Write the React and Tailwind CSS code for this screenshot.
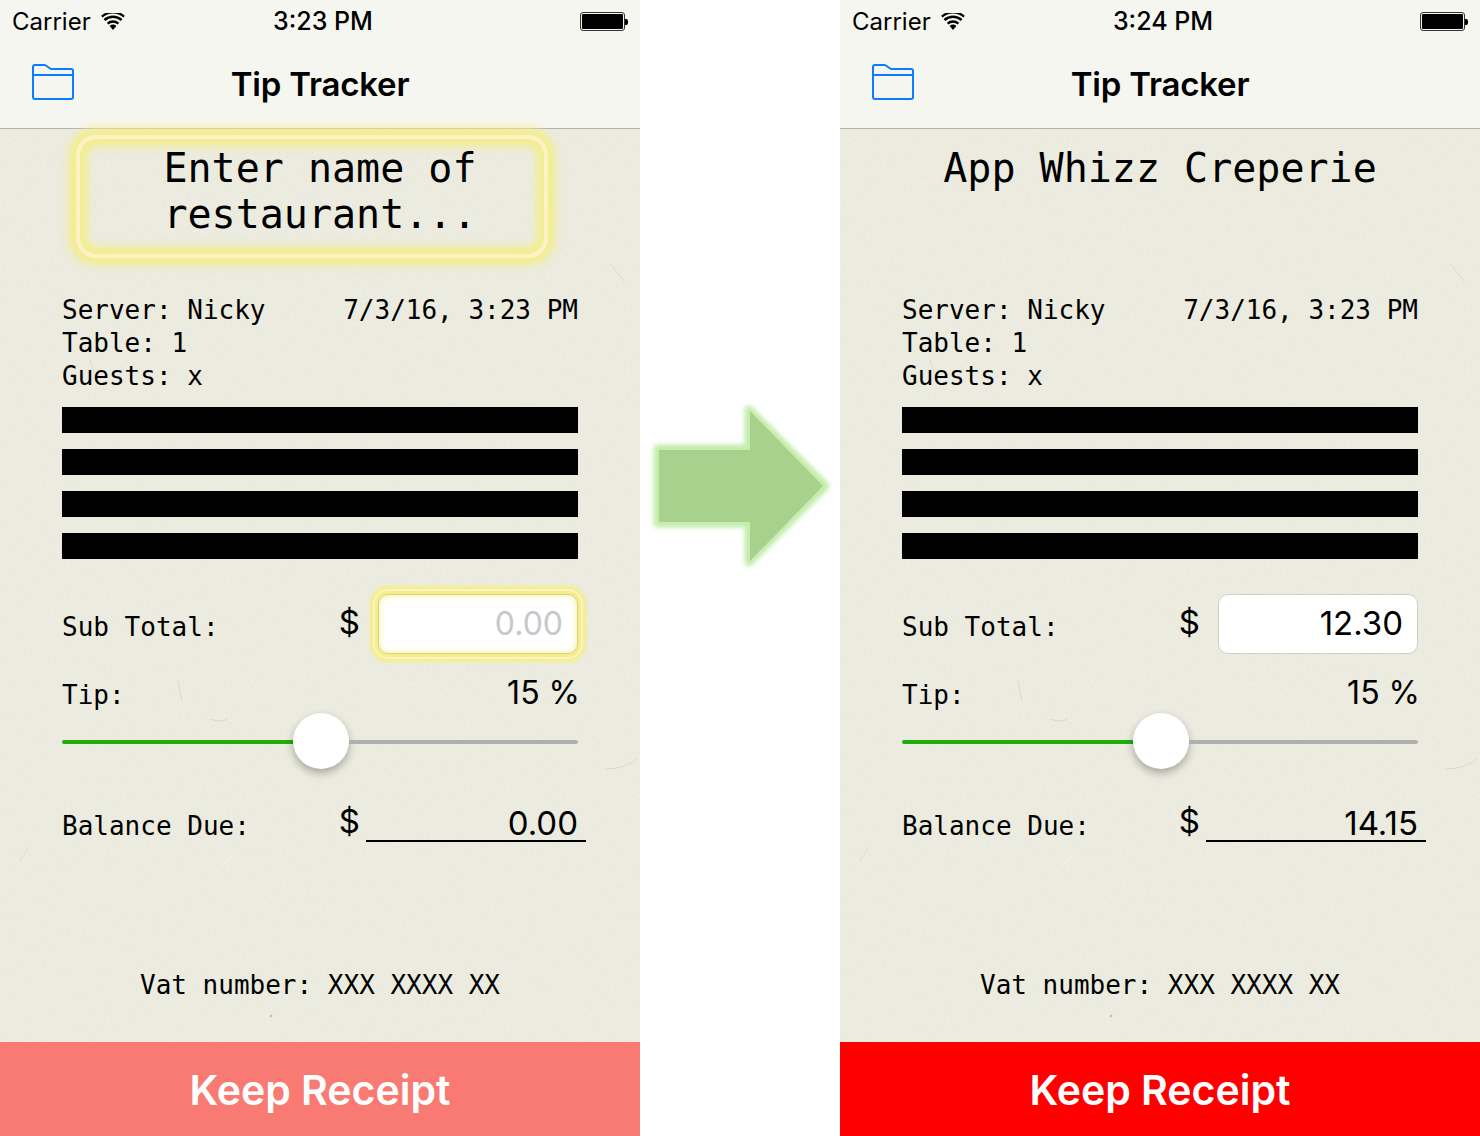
import React from 'react';

const mono = 'font-["DejaVu_Sans_Mono",monospace]';
const sans = 'font-["Inter",sans-serif]';

function Wifi() {
  return (
    <svg width="24" height="18" viewBox="0 0 24 18" className="block">
      <path d="M12 17 L8.6 12.9 A5.2 5.2 0 0 1 15.4 12.9 Z" fill="#000" />
      <path d="M6.6 10.6 A8.2 8.2 0 0 1 17.4 10.6" fill="none" stroke="#000" strokeWidth="2.4" />
      <path d="M3.4 7 A12.8 12.8 0 0 1 20.6 7" fill="none" stroke="#000" strokeWidth="2.4" />
      <path d="M0.9 3.6 A16.6 16.6 0 0 1 23.1 3.6" fill="none" stroke="#000" strokeWidth="2.2" />
    </svg>
  );
}

function Battery() {
  return (
    <div className="flex items-center">
      <div className="w-[45px] h-[19px] rounded-[3px] border border-[#333] p-[1px]">
        <div className="w-full h-full rounded-[1px] bg-black" />
      </div>
      <div className="w-[3px] h-[6px] bg-black rounded-r-[2px]" />
    </div>
  );
}

function Folder() {
  return (
    <svg width="42" height="36" viewBox="0 0 42 36" className="block">
      <path
        d="M1 5 V3 Q1 1 3 1 H13 L19 5 H39 Q41 5 41 7 V33 Q41 35 39 35 H3 Q1 35 1 33 Z M1 11 H41"
        fill="none"
        stroke="#0a7cff"
        strokeWidth="2"
        strokeLinejoin="round"
      />
    </svg>
  );
}

function Arrow() {
  return (
    <svg width="200" height="190" viewBox="0 0 200 190" className="block">
      <defs>
        <filter id="glow" x="-10%" y="-10%" width="120%" height="120%">
          <feGaussianBlur stdDeviation="2.2" />
        </filter>
      </defs>
      <path d="M18 59 H109 V20 L185 96 L109 172 V133 H18 Z" fill="#c4edac" stroke="#c4edac" strokeWidth="9" strokeLinejoin="round" filter="url(#glow)" />
      <path d="M19 60 H110 V21 L183 96 L110 171 V132 H19 Z" fill="#a9d18e" />
    </svg>
  );
}

// paper grain and a few fibres behind the receipt
function Paper({ id }) {
  return (
    <svg width="640" height="913" className="absolute inset-0 pointer-events-none">
      <defs>
        <filter id={id} x="0" y="0" width="100%" height="100%">
          <feTurbulence type="fractalNoise" baseFrequency="0.3" numOctaves="3" seed="4" />
          <feColorMatrix values="0 0 0 0 0.6  0 0 0 0 0.6  0 0 0 0 0.5  0.9 0 0 0 -0.32" />
        </filter>
      </defs>
      <rect width="640" height="913" filter={`url(#${id})`} opacity="0.22" />
      <g fill="none" stroke="#d2d2c2" strokeWidth="1" opacity="0.7">
        <path d="M605 640 Q625 640 637 630" />
        <path d="M210 590 Q220 594 228 590" />
        <path d="M610 135 L624 152" />
        <path d="M90 230 L96 250" />
        <path d="M178 552 L182 572" />
        <path d="M28 720 L20 732" />
      </g>
      <path d="M222 736 L232 728" stroke="#f6f6ee" strokeWidth="1" fill="none" />
      <circle cx="271" cy="887" r="1" fill="#a8a89c" />
    </svg>
  );
}

function Phone({ id, time, title, amount, balance, highlight }) {
  return (
    <div className="w-[640px] h-[1136px] shrink-0 flex flex-col bg-[#ecece0] text-black">
      <div className={`${sans} h-[129px] shrink-0 bg-[#f6f6f1] border-b border-[#b2b2ac] flex flex-col`}>
        <div className="h-[40px] px-[12px] pt-[3px] grid grid-cols-3 items-center text-[24px]">
          <div className="flex items-center gap-[10px]">
            <span>Carrier</span>
            <Wifi />
          </div>
          <div className="text-center pl-[6px] text-[25px] font-medium whitespace-nowrap">{time}</div>
          <div className="flex justify-end">
            <Battery />
          </div>
        </div>
        <div className="flex-1 relative flex items-center justify-center">
          <div className="absolute left-[32px] top-[24px]">
            <Folder />
          </div>
          <div className="text-[33px] font-semibold tracking-[-0.2px] pt-[2px]">Tip Tracker</div>
        </div>
      </div>

      <div className={`${mono} relative flex-1 flex flex-col px-[62px]`}>
        <Paper id={id} />
        <div
          className={`relative mt-[6px] ml-[14px] mr-[30px] h-[123px] shrink-0 rounded-[20px] border-[4px] text-center text-[40px] leading-[46px] pt-[6px] ${
            highlight
              ? 'border-[#fdf2c4] shadow-[0_0_9px_7px_#f4ee8a,inset_0_0_9px_7px_#f4ee8a]'
              : 'border-transparent'
          }`}
        >
          <div className="ml-[-6px] mr-[-22px]">{title}</div>
        </div>

        <div className="relative mt-[36px] text-[26px] leading-[33px]">
          <div className="flex justify-between">
            <span>Server: Nicky</span>
            <span>7/3/16, 3:23 PM</span>
          </div>
          <div>Table: 1</div>
          <div>Guests: x</div>
        </div>

        <div className="relative mt-[14px] flex flex-col gap-[16px]">
          <div className="h-[26px] bg-black" />
          <div className="h-[26px] bg-black" />
          <div className="h-[26px] bg-black" />
          <div className="h-[26px] bg-black" />
        </div>

        <div className="relative mt-[35px] h-[60px] flex items-center text-[26px]">
          <span className="pt-[6px] flex-1">Sub Total:</span>
          <span className={`${sans} text-[33px] mr-[18px] -mt-[2px]`}>$</span>
          <div
            className={`${sans} w-[200px] h-[60px] rounded-[10px] bg-white border flex items-center justify-end pr-[14px] ${
              highlight
                ? 'border-[#d8d27c] text-[32px] text-[#c7c7cd] shadow-[0_0_0_3px_#f4ee8a,0_0_0_5px_#fdf2c4,0_0_3px_8px_#f4ee8a,inset_0_0_6px_1px_#f8f4b0]'
                : 'border-[#cfcfc8] text-[33px] text-black'
            }`}
          >
            {amount}
          </div>
        </div>

        <div className="relative mt-[20px] flex justify-between items-center h-[40px]">
          <span className="text-[26px] pt-[2px]">Tip:</span>
          <span className={`${sans} text-[32px] -mr-[2px] -mt-[2px]`}>15 %</span>
        </div>

        <div className="relative -mt-[1px] h-[56px] flex items-center">
          <div className="w-[231px] h-[4px] mt-[2px] rounded-l-full bg-[#1fae0a]" />
          <div className="w-[56px] h-[56px] rounded-full bg-white shadow-[0_4px_8px_rgba(0,0,0,0.3)]" />
          <div className="flex-1 h-[4px] mt-[2px] rounded-r-full bg-[#b0b0b3]" />
        </div>

        <div className="relative mt-[25px] h-[48px] flex items-end text-[26px]">
          <span className="flex-1 -mb-[4px]">Balance Due:</span>
          <span className={`${sans} text-[33px] mr-[6px] leading-[48px] -mb-[3px]`}>$</span>
          <div className={`${sans} w-[220px] -mr-[8px] h-[48px] border-b-2 border-black text-right pr-[8px] pt-[6px] text-[33px] leading-[46px]`}>
            {balance}
          </div>
        </div>

        <div className="relative mt-[127px] text-center text-[26px] leading-[33px] whitespace-nowrap">
          Vat number: XXX XXXX XX
        </div>
      </div>

      <div
        className={`${sans} h-[94px] pt-[3px] shrink-0 flex items-center justify-center text-white text-[41px] font-semibold ${
          highlight ? 'bg-[#f87a72]' : 'bg-[#ff0000]'
        }`}
      >
        Keep Receipt
      </div>
    </div>
  );
}

export default function App() {
  return (
    <div className="w-[1480px] h-[1136px] flex bg-white overflow-hidden">
      <Phone id="paper-a" time="3:23 PM" title="Enter name of restaurant..." amount="0.00" balance="0.00" highlight />
      <div className="w-[200px] shrink-0 pt-[390px]">
        <Arrow />
      </div>
      <Phone id="paper-b" time="3:24 PM" title="App Whizz Creperie" amount="12.30" balance="14.15" />
    </div>
  );
}
